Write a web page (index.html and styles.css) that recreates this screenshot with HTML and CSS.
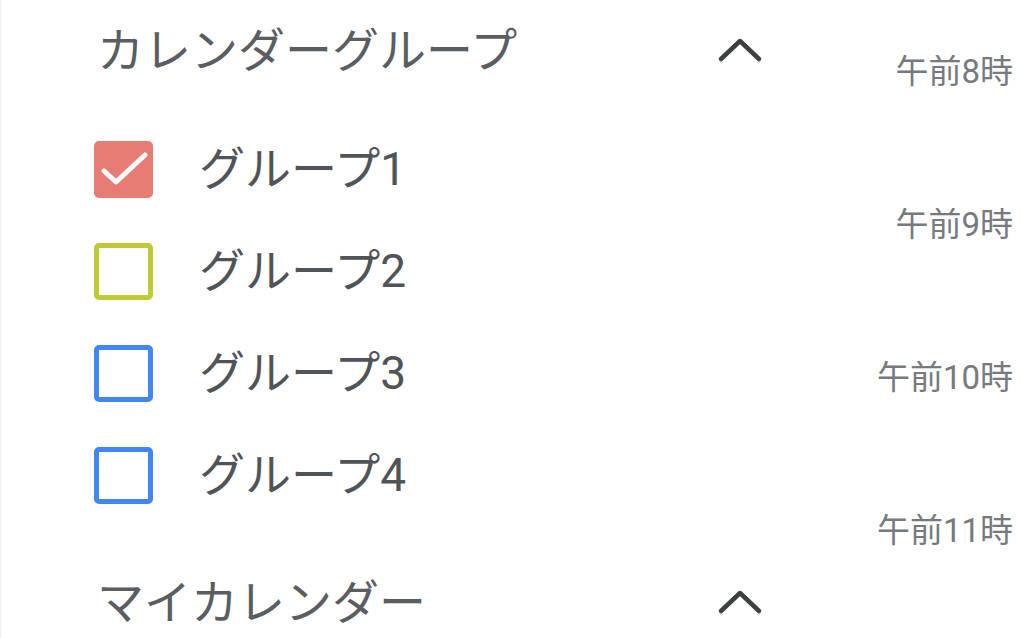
FILE: index.html
```html
<!DOCTYPE html>
<html lang="ja">
<head>
<meta charset="utf-8">
<title>カレンダー</title>
<link rel="stylesheet" href="styles.css">
</head>
<body>
<div class="page">
  <aside class="sidebar">
    <div class="section-head">
      <span class="section-title">カレンダーグループ</span>
      <svg class="chevron" viewBox="0 0 48 28" width="48" height="28"><path d="M5 23 L24 5 L43 23" fill="none" stroke="#3c4043" stroke-width="4.5" stroke-linecap="round" stroke-linejoin="round"/></svg>
    </div>
    <ul class="groups">
      <li class="group">
        <span class="box box-checked"><svg viewBox="0 0 58 58" width="58" height="58"><path d="M9 31 L21 42 L50 15" fill="none" stroke="#fff" stroke-width="5" stroke-linecap="round" stroke-linejoin="round"/></svg></span>
        <span class="label">グループ1</span>
      </li>
      <li class="group">
        <span class="box box-citron"></span>
        <span class="label">グループ2</span>
      </li>
      <li class="group">
        <span class="box box-blue"></span>
        <span class="label">グループ3</span>
      </li>
      <li class="group">
        <span class="box box-blue"></span>
        <span class="label">グループ4</span>
      </li>
    </ul>
    <div class="section-head section-head-2">
      <span class="section-title">マイカレンダー</span>
      <svg class="chevron" viewBox="0 0 48 28" width="48" height="28"><path d="M5 23 L24 5 L43 23" fill="none" stroke="#3c4043" stroke-width="4.5" stroke-linecap="round" stroke-linejoin="round"/></svg>
    </div>
  </aside>
  <div class="times">
    <div class="time">午前8時</div>
    <div class="time">午前9時</div>
    <div class="time">午前10時</div>
    <div class="time">午前11時</div>
  </div>
</div>
</body>
</html>
```
FILE: styles.css
```css
html, body {
  margin: 0;
  padding: 0;
  background: #ffffff;
}
body {
  width: 1020px;
  height: 638px;
  overflow: hidden;
  font-family: Roboto, "Noto Sans CJK JP", sans-serif;
  border-left: 1px solid #f2f2f2;
  box-sizing: border-box;
}
.page {
  display: flex;
  height: 100%;
}
.sidebar {
  width: 763px;
  flex: none;
}
.section-head {
  height: 100px;
  display: grid;
  grid-template-columns: 1fr 48px;
  align-items: center;
  padding-left: 96px;
}
.section-head-2 {
  margin-top: 26px;
}
.section-title {
  font-size: 47px;
  line-height: 1;
  color: #5a5e62;
  white-space: nowrap;
}
.chevron {
  display: block;
}
.groups {
  list-style: none;
  margin: 18px 0 0 0;
  padding: 0 0 0 93px;
}
.group {
  height: 102px;
  display: flex;
  align-items: center;
  gap: 46px;
}
.box {
  width: 59px;
  height: 57px;
  box-sizing: border-box;
  border-radius: 5px;
  border: 5px solid transparent;
  flex: none;
  display: flex;
  align-items: center;
  justify-content: center;
}
.box svg {
  display: block;
  width: 58px;
  height: 58px;
  margin: -5px;
}
.box-checked {
  background: #e67c73;
  border-color: #e67c73;
}
.box-citron {
  border-color: #c0ca33;
}
.box-blue {
  border-color: #4285f4;
}
.label {
  font-size: 46px;
  line-height: 1;
  color: #505458;
  white-space: nowrap;
}
.times {
  flex: 1;
  display: flex;
  flex-direction: column;
  align-items: flex-end;
  padding-top: 55px;
  padding-right: 7px;
  gap: 119px;
}
.time {
  font-size: 33px;
  line-height: 34px;
  height: 34px;
  color: #767a7e;
  white-space: nowrap;
}
```
